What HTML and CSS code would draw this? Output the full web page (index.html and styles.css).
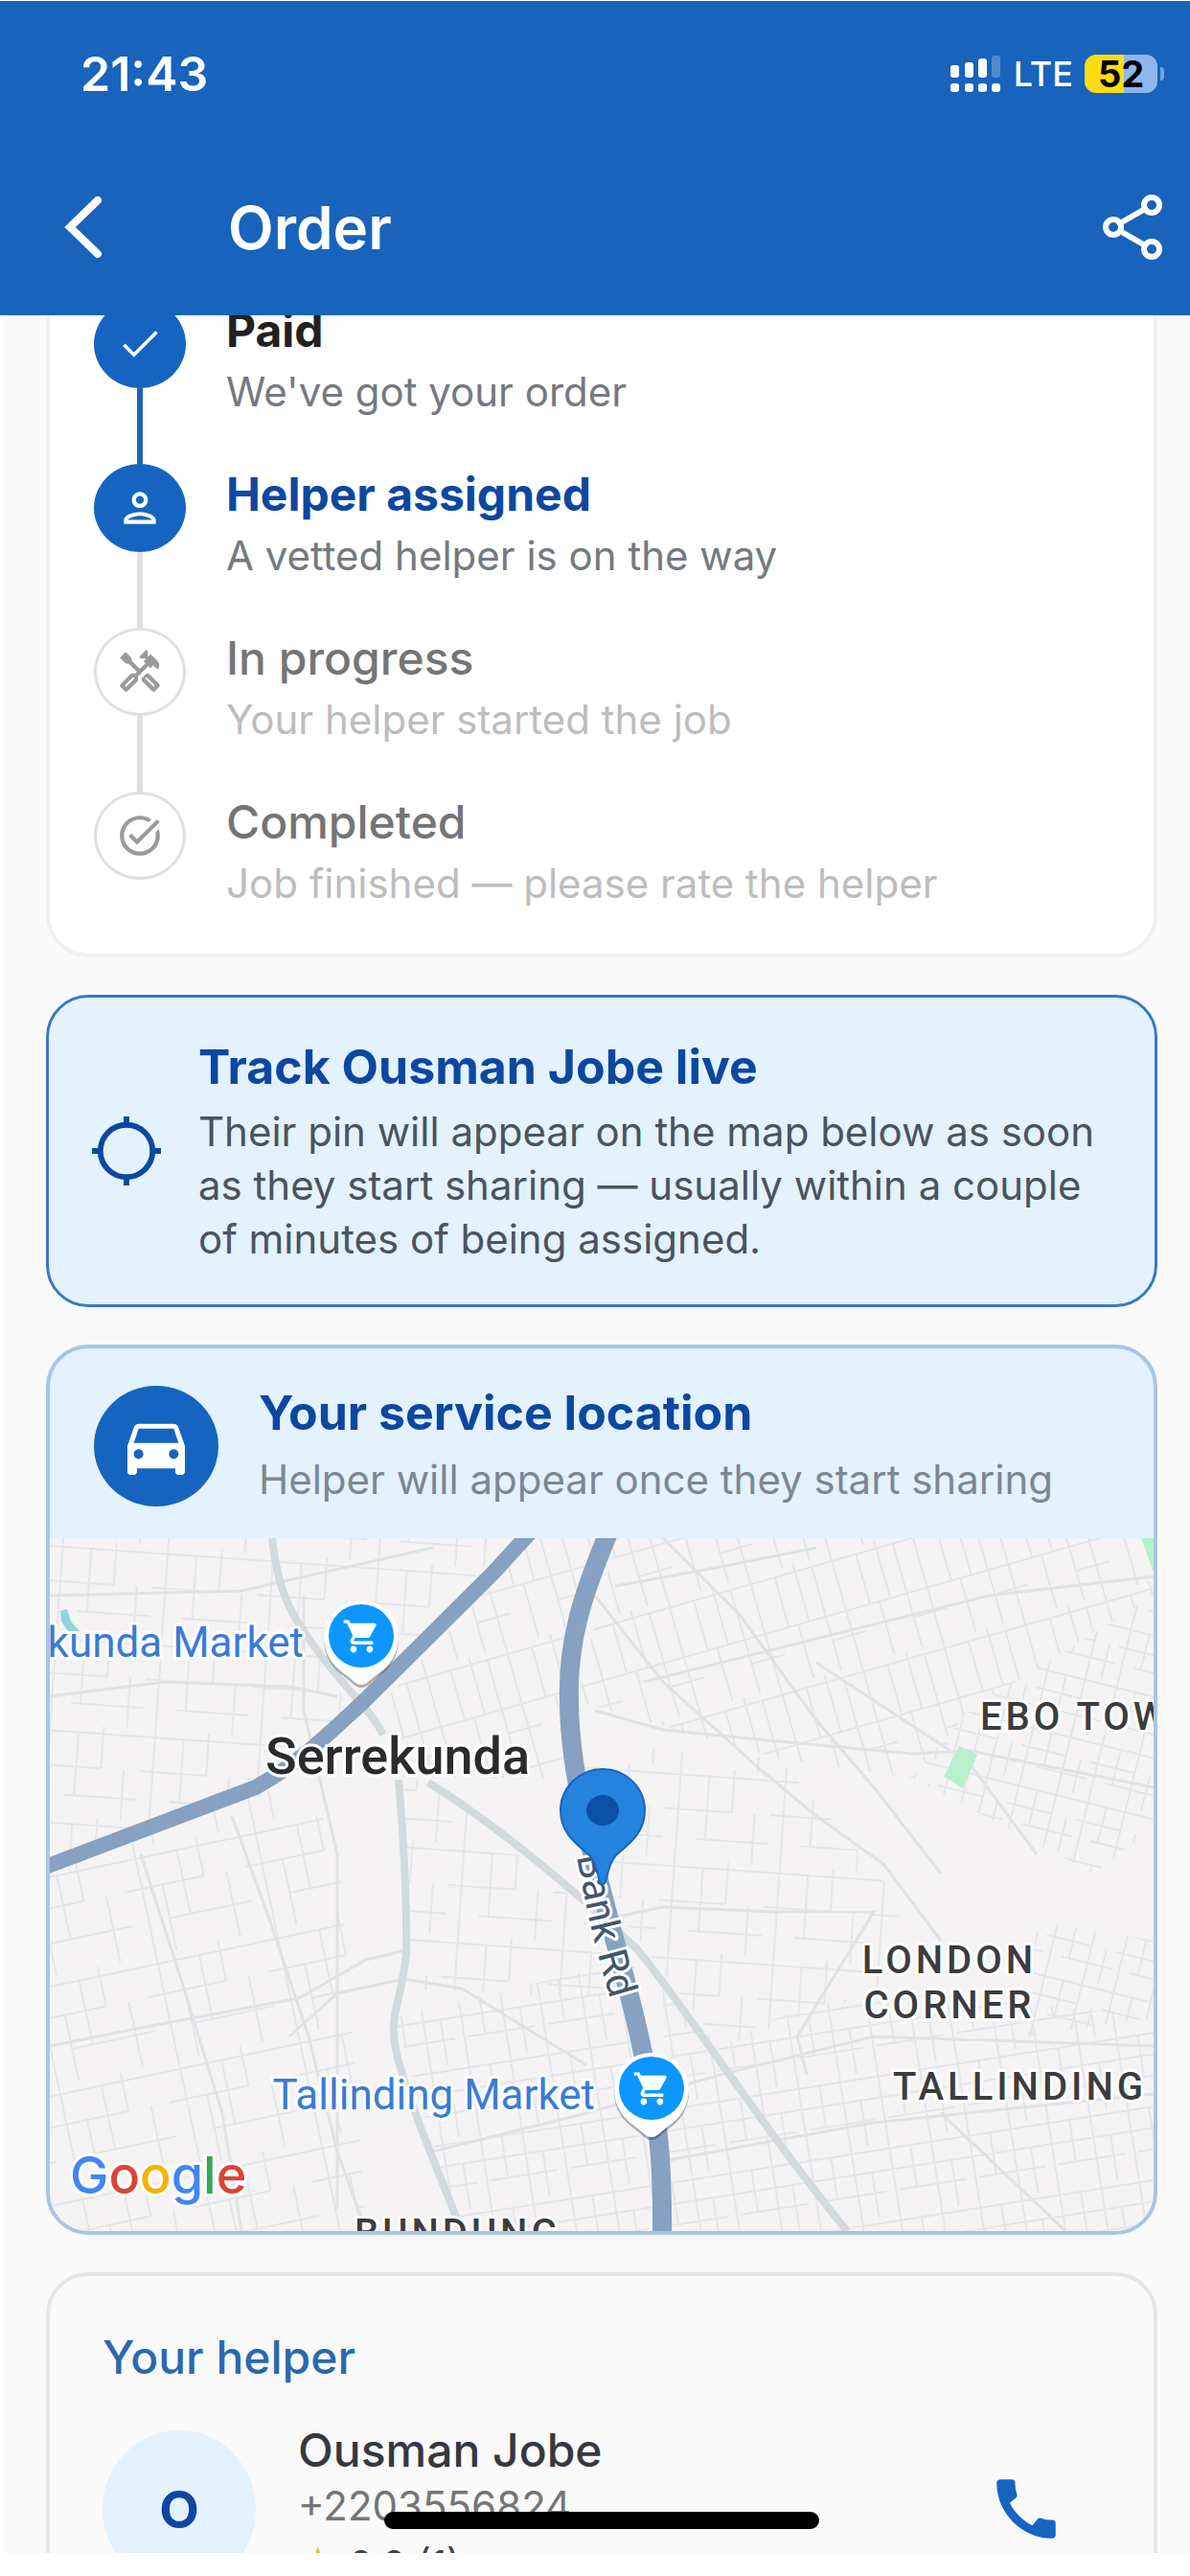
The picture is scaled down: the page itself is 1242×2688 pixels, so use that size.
FILE: index.html
```html
<!DOCTYPE html>
<html lang="en">
<head>
    <meta charset="UTF-8">
    <meta name="viewport" content="width=device-width, initial-scale=1">
    <title>Order</title>
    <link rel="stylesheet" href="styles.css">
</head>
<body>
    <div class="screen">
        <header class="top">
            <div class="status-bar">
                <span class="clock">21:43</span>
                <div class="status-icons">
                    <svg class="signal" viewBox="0 0 54 40" fill="#fff">
                        <rect x="0" y="11" width="9" height="13" rx="3"/>
                        <rect x="15" y="8" width="9" height="16" rx="3"/>
                        <rect x="29" y="4" width="9" height="20" rx="3"/>
                        <rect x="43" y="1" width="9" height="23" rx="3" opacity="0.25"/>
                        <rect x="0" y="30" width="9" height="9" rx="3"/>
                        <rect x="15" y="30" width="9" height="9" rx="3"/>
                        <rect x="29" y="30" width="9" height="9" rx="3"/>
                        <rect x="43" y="30" width="9" height="9" rx="3"/>
                    </svg>
                    <span class="network">LTE</span>
                    <span class="battery">52</span>
                </div>
            </div>
            <div class="app-bar">
                <button class="icon-button" aria-label="Back">
                    <svg class="back-icon" viewBox="0 0 44 68" fill="none" stroke="#fff" stroke-width="8" stroke-linecap="round"><path d="M38 6 L9 34 L38 62"/></svg>
                </button>
                <h1>Order</h1>
                <button class="icon-button" aria-label="Share">
                    <svg class="share-icon" viewBox="0 0 64 70" fill="none" stroke="#fff" stroke-width="6"><circle cx="12" cy="35" r="8"/><circle cx="52" cy="12" r="8"/><circle cx="52" cy="58" r="8"/><path d="M19 31 L45 16 M19 39 L45 54"/></svg>
                </button>
            </div>
        </header>

        <main class="content">
            <ol class="card steps">
                <li class="step done">
                    <span class="dot"><svg viewBox="0 0 24 24"><path d="M9 16.200 4.600 11.800l-1.200 1.200L9 18.600 21 6.600l-1.200-1.200z"/></svg></span>
                    <div class="step-text">
                        <h2>Paid</h2>
                        <p>We've got your order</p>
                    </div>
                </li>
                <li class="step current">
                    <span class="dot"><svg viewBox="0 0 24 24"><path d="M12 6a2 2 0 1 1 0 4 2 2 0 0 1 0-4m0 10c2.700 0 5.800 1.290 6 2H6c.230-.720 3.310-2 6-2m0-12C9.790 4 8 5.790 8 8s1.790 4 4 4 4-1.790 4-4-1.790-4-4-4zm0 10c-2.670 0-8 1.340-8 4v2h16v-2c0-2.660-5.330-4-8-4z"/></svg></span>
                    <div class="step-text">
                        <h2>Helper assigned</h2>
                        <p>A vetted helper is on the way</p>
                    </div>
                </li>
                <li class="step">
                    <span class="dot"><svg viewBox="0 0 24 24"><path d="M21.670 18.170l-5.300-5.300h-.990l-2.540 2.540v.990l5.300 5.300c.390.390 1.020.390 1.410 0l2.120-2.120c.390-.380.390-1.020 0-1.410zm-2.830 1.420-4.240-4.240.710-.710 4.240 4.240-.710.710z"/><path d="M17.340 10.190l1.410-1.410 2.120 2.120c1.170-1.170 1.170-3.070 0-4.240l-3.540-3.540-1.410 1.410V1.710l-.700-.710-3.540 3.540.710.710h2.830l-1.410 1.410 1.060 1.060-2.890 2.890-4.130-4.130V5.060L4.830 2.040 2 4.870 5.030 7.900h1.410l4.130 4.130-.850.850H7.600l-5.300 5.300c-.390.390-.390 1.020 0 1.410l2.120 2.120c.390.390 1.020.390 1.410 0l5.300-5.300v-2.120l5.150-5.150 1.060 1.050zm-7.980 5.150-4.240 4.240-.710-.710 4.240-4.240.710.710z"/></svg></span>
                    <div class="step-text">
                        <h2>In progress</h2>
                        <p>Your helper started the job</p>
                    </div>
                </li>
                <li class="step">
                    <span class="dot"><svg viewBox="0 0 24 24"><path d="M22 5.180 10.590 16.600l-4.240-4.240 1.410-1.410 2.830 2.830 10-10L22 5.180zm-2.210 5.040c.130.570.210 1.170.210 1.780 0 4.420-3.580 8-8 8s-8-3.580-8-8 3.580-8 8-8c1.580 0 3.040.460 4.280 1.250l1.440-1.440A9.900 9.900 0 0 0 12 2C6.480 2 2 6.480 2 12s4.480 10 10 10 10-4.480 10-10c0-1.190-.220-2.330-.600-3.390l-1.610 1.610z"/></svg></span>
                    <div class="step-text">
                        <h2>Completed</h2>
                        <p>Job finished — please rate the helper</p>
                    </div>
                </li>
            </ol>

            <section class="card track">
                <svg class="target-icon" viewBox="0 0 74 74" fill="none" stroke="#0d47a1" stroke-width="6"><circle cx="37" cy="37" r="28"/><path d="M37 0v11M37 63v11M0 37h11M63 37h11"/></svg>
                <div>
                    <h2>Track Ousman Jobe live</h2>
                    <p>Their pin will appear on the map below as soon as they start sharing — usually within a couple of minutes of being assigned.</p>
                </div>
            </section>

            <section class="card location">
                <div class="location-head">
                    <span class="car"><svg viewBox="0 0 24 24" fill="#fff"><path d="M18.920 6.010C18.720 5.420 18.160 5 17.500 5h-11c-.660 0-1.210.420-1.420 1.010L3 12v8c0 .550.450 1 1 1h1c.550 0 1-.450 1-1v-1h12v1c0 .550.450 1 1 1h1c.550 0 1-.450 1-1v-8l-2.080-5.990zM6.500 16c-.830 0-1.500-.670-1.500-1.500S5.670 13 6.500 13s1.500.670 1.500 1.500S7.330 16 6.500 16zm11 0c-.830 0-1.500-.670-1.500-1.500s.670-1.500 1.500-1.500 1.500.670 1.500 1.500-.670 1.500-1.500 1.500zM5 11l1.500-4.500h11L19 11H5z"/></svg></span>
                    <div>
                        <h2>Your service location</h2>
                        <p>Helper will appear once they start sharing</p>
                    </div>
                </div>
                <svg class="map" viewBox="0 0 1152 723" preserveAspectRatio="xMidYMid slice" role="img" aria-label="Map of Serrekunda">
                    <defs>
                        <pattern id="blocksA" width="128" height="112" patternUnits="userSpaceOnUse" patternTransform="rotate(-12)">
                            <path class="street" d="M0 10H128M0 42H84M40 78H128M18 0V112M62 10V78M108 42V112M40 42V112M84 0V42"/>
                        </pattern>
                        <pattern id="blocksB" width="88" height="120" patternUnits="userSpaceOnUse" patternTransform="rotate(-16)">
                            <path class="street" d="M0 8H88M0 62H88M12 8V62M34 0V62M52 8V120M74 0V120M22 62V120M52 88H88"/>
                        </pattern>
                        <pattern id="blocksC" width="74" height="62" patternUnits="userSpaceOnUse" patternTransform="rotate(14)">
                            <path class="street" d="M0 6H74M0 26H48M20 44H74M8 0V62M28 6V44M48 0V62M64 26V62"/>
                        </pattern>
                        <pattern id="blocksD" width="110" height="96" patternUnits="userSpaceOnUse" patternTransform="rotate(4)">
                            <path class="street" d="M0 8H110M0 44H70M34 74H110M14 0V96M44 8V74M70 0V44M94 44V96"/>
                        </pattern>
                        <pattern id="blocksE" width="84" height="76" patternUnits="userSpaceOnUse" patternTransform="rotate(-9)">
                            <path class="street" d="M0 6H84M0 28H84M14 50H84M10 0V76M32 6V50M54 0V76M72 28V76"/>
                        </pattern>
                        <path id="bankRd" d="M550 332 C558 378 568 425 586 484"/>
                        <g id="market">
                            <path d="M0 51 C-6 51 -9 46 -17 40 C-30 31 -39 19 -39 0 A39 37 0 0 1 39 0 C39 19 30 31 17 40 C9 46 6 51 0 51Z" fill="#000" opacity="0.3" transform="translate(0 3)"/>
                            <path d="M0 51 C-6 51 -9 46 -17 40 C-30 31 -39 19 -39 0 A39 37 0 0 1 39 0 C39 19 30 31 17 40 C9 46 6 51 0 51Z" fill="#fff"/>
                            <ellipse rx="34" ry="33" fill="#0b97ff"/>
                            <path transform="translate(-20 -20) scale(1.7)" fill="#fff" d="M7 18c-1.100 0-1.990.900-1.990 2S5.900 22 7 22s2-.900 2-2-.900-2-2-2zM1 2v2h2l3.600 7.590-1.350 2.450c-.160.280-.250.610-.250.960 0 1.100.900 2 2 2h12v-2H7.420c-.140 0-.250-.110-.250-.250l.030-.120.900-1.630h7.450c.750 0 1.410-.410 1.750-1.030l3.580-6.490A1 1 0 0 0 20 4H5.210l-.940-2H1zm16 16c-1.100 0-1.990.900-1.990 2s.890 2 1.990 2 2-.900 2-2-.900-2-2-2z"/>
                            <path d="M-12 -11 H14 L8 2 H-6Z" fill="#fff"/>
                        </g>
                    </defs>
                    <rect width="1152" height="723" fill="#f5f3f4"/>

                    <!-- small streets, one block pattern per district -->
                    <path fill="url(#blocksD)" d="M0 0H232L257 90 328 165 225 255 0 340Z"/>
                    <path fill="url(#blocksA)" d="M0 350 225 262 300 300 330 723 0 723Z"/>
                    <path fill="url(#blocksD)" d="M232 0H480L328 165 257 90Z M370 250 395 255 569 394 600 480 372 470Z"/>
                    <path fill="url(#blocksB)" d="M500 0H570L542 200 550 250 370 250 340 180Z"/>
                    <path fill="url(#blocksE)" d="M360 500 610 440 640 723 427 723Z M640 470 700 530 830 723 640 723Z"/>
                    <path fill="url(#blocksD)" d="M550 215 760 230 890 380 870 470 700 530 600 400Z"/>
                    <path fill="url(#blocksB)" d="M590 0H1152V60L960 180 900 250 760 230 550 170Z"/>
                    <path fill="url(#blocksC)" d="M1152 60V300L1090 350 900 250 960 180Z"/>
                    <path fill="url(#blocksE)" d="M760 500 870 470 1152 500V723H830L700 530Z"/>
                    <path fill="url(#blocksC)" d="M1030 400 1152 420V500L1020 520Z"/>

                    <!-- longer streets -->
                    <path class="lane" d="M640 0 720 80 800 190 860 260 930 350"/>
                    <path class="lane" d="M569 60 640 150 740 240 800 290 870 340 930 420"/>
                    <path class="lane" d="M569 180 640 200 760 212 900 225 960 222 1152 260"/>
                    <path class="lane" d="M590 50 700 30 800 10M620 150 780 110 980 60 1152 40"/>
                    <path class="lane" d="M0 530 100 510 260 480 330 440 372 430"/>
                    <path class="lane" d="M190 290 230 400 270 520 300 640 330 723"/>
                    <path class="lane" d="M95 330 140 470 180 600 200 723"/>
                    <path class="lane" d="M250 520 300 475 370 460 430 470 560 550"/>
                    <path class="lane" d="M265 60V180L300 330V700"/>
                    <path class="lane" d="M0 165 120 150 250 155 300 165M0 60 200 55 400 10"/>
                    <path class="lane" d="M569 400 640 385 760 390 860 390 780 520 790 560"/>
                    <path class="lane" d="M400 640 560 600 700 560 860 520 1152 530"/>
                    <path class="lane" d="M640 650 860 610 1152 580M930 600 1060 723"/>
                    <path class="lane" d="M800 130 960 235 1030 330"/>

                    <path fill="#b8efcd" d="M949 217 968 226 953 261 933 249Z M1139 0H1152V36Z"/>
                    <path fill="#8fd6da" d="M11 76 18 74 22 87 31 97 19 97 12 87Z"/>

                    <path class="road" d="M232 0 C238 55 250 80 285 125 S335 180 348 205"/>
                    <path class="road" d="M364 252 C368 300 373 380 372 434 C368 480 352 500 362 538 C375 590 405 660 430 723"/>
                    <path class="road" d="M395 255 C460 295 540 360 613 429 C660 485 740 610 832 723"/>

                    <path class="highway" d="M-10 345 L215 260 C260 235 290 205 328 170 L463 36 505 -10"/>
                    <path class="highway wide" d="M585 -10 C555 60 540 110 542 170 C542 280 600 440 618 533 C634 600 640 640 639 733"/>

                    <text class="place" x="265" y="124" text-anchor="end">Serrekunda Market</text>
                    <use href="#market" x="325" y="102"/>
                    <text class="city" x="225" y="246">Serrekunda</text>
                    <text class="road-name"><textPath href="#bankRd">Bank Rd</textPath></text>
                    <path d="M577 361 C571 361 574 344 564 332 C553 321 533 310 533 284 A44 43 0 0 1 621 284 C621 310 601 321 590 332 C580 344 583 361 577 361Z" fill="#2583de" stroke="#1a66bd" stroke-width="2"/>
                    <ellipse cx="577" cy="284" rx="17" ry="16" fill="#0a50a6"/>
                    <text class="area" x="971" y="200">EBO TOWN</text>
                    <text class="area" x="939" y="454" text-anchor="middle">LONDON</text>
                    <text class="area" x="939" y="501" text-anchor="middle">CORNER</text>
                    <text class="area" x="880" y="586">TALLINDING</text>
                    <text class="area" x="318" y="739">BUNDUNG</text>
                    <text class="place" x="569" y="596" text-anchor="end">Tallinding Market</text>
                    <use href="#market" x="628" y="574"/>
                    <text class="google" x="21" y="684"><tspan fill="#4285f4">G</tspan><tspan fill="#db4437">o</tspan><tspan fill="#f4b400">o</tspan><tspan fill="#4285f4">g</tspan><tspan fill="#34a853">l</tspan><tspan fill="#db4437">e</tspan></text>
                </svg>
            </section>

            <section class="card helper">
                <h2>Your helper</h2>
                <div class="helper-row">
                    <span class="avatar">O</span>
                    <div class="helper-info">
                        <h3>Ousman Jobe</h3>
                        <p>+2203556824</p>
                        <p class="rating"><span class="star">★</span> 0.0 (1)</p>
                    </div>
                    <button class="icon-button call" aria-label="Call helper">
                        <svg class="call-icon" viewBox="0 0 24 24" fill="#1565c0"><path d="M20.010 15.380c-1.230 0-2.420-.200-3.530-.560a.980.980 0 0 0-1.010.240l-1.570 1.970c-2.830-1.350-5.480-3.900-6.890-6.830l1.950-1.660c.270-.280.350-.670.240-1.020-.370-1.110-.560-2.300-.560-3.530 0-.540-.450-.990-.990-.990H4.190C3.650 3 3 3.240 3 3.990 3 13.280 10.730 21 20.010 21c.710 0 .990-.630.990-1.180v-3.450c0-.540-.450-.990-.990-.990z"/></svg>
                    </button>
                </div>
            </section>
        </main>
        <div class="home-bar"></div>
    </div>
</body>
</html>
```
FILE: styles.css
```css
* {
    box-sizing: border-box;
}
body {
    margin: 0;
    height: 100vh;
    padding-bottom: 24px;
    background-color: #fff;
    font-family: Inter, "Liberation Sans", sans-serif;
    overflow: hidden;
}
h1, h2, h3, p, ol {
    margin: 0;
    padding: 0;
}
.screen {
    position: relative;
    height: 100%;
    background-color: #fafafa;
    overflow: hidden;
}
.top {
    position: relative;
    z-index: 1;
    background-color: #1863bb;
    color: #fff;
    border-top: 1px solid #fff;
}
.status-bar {
    display: flex;
    justify-content: space-between;
    align-items: center;
    height: 152px;
    padding: 0 28px 0 84px;
}
.clock {
    font-size: 50px;
    font-weight: 600;
}
.status-icons {
    display: flex;
    align-items: center;
    gap: 12px;
}
.signal {
    width: 54px;
    height: 40px;
}
.network {
    font-size: 36px;
    font-weight: 500;
}
.battery {
    position: relative;
    width: 76px;
    height: 40px;
    margin-right: 6px;
    border-radius: 12px;
    background: linear-gradient(to right, #ffdb14 54%, #8db6ec 54%);
    color: #000;
    font-size: 38px;
    font-weight: 700;
    line-height: 40px;
    text-align: center;
}
.battery::after {
    content: "";
    position: absolute;
    right: -7px;
    top: 13px;
    width: 4px;
    height: 14px;
    border-radius: 0 4px 4px 0;
    background-color: #6fa3e0;
}
.app-bar {
    display: flex;
    align-items: center;
    height: 176px;
    padding: 0 28px 8px 64px;
}
.app-bar h1 {
    flex: 1;
    margin-left: 130px;
    font-size: 62px;
    font-weight: 600;
}
.icon-button {
    display: flex;
    padding: 0;
    border: none;
    background: none;
    cursor: pointer;
}
.back-icon {
    width: 44px;
    height: 68px;
}
.share-icon {
    width: 64px;
    height: 70px;
}

/* first card is scrolled partly under the app bar */
.content {
    display: flex;
    flex-direction: column;
    gap: 39px;
    margin-top: -60px;
    padding: 0 34px 0 44px;
    border-left: 4px solid #fff;
}
.card {
    flex: none;
    border: 4px solid #f0f0f0;
    border-radius: 44px;
    overflow: hidden;
}
.steps {
    padding: 40px 46px 77px;
    background-color: #fff;
    list-style: none;
}
.step {
    display: flex;
    gap: 42px;
    height: 171px;
}
.step:last-child {
    height: 92px;
}
.dot {
    position: relative;
    flex: none;
    display: flex;
    justify-content: center;
    align-items: center;
    width: 96px;
    height: 92px;
    border: 3px solid #e0e0e0;
    border-radius: 50%;
    background-color: #fff;
}
.dot svg {
    width: 50px;
    height: 50px;
    fill: #9a9a9a;
}
.step:not(:last-child) .dot::after {
    content: "";
    position: absolute;
    top: 89px;
    width: 6px;
    height: 79px;
    background-color: #e0e0e0;
}
.step.done .dot::after {
    background-color: #1f63b4 !important;
}
.step.done .dot,
.step.current .dot {
    border-color: #1565c0;
    background-color: #1565c0;
}
.step.done svg,
.step.current svg {
    fill: #fff;
}
.step h2 {
    color: #757575;
    font-size: 48px;
    font-weight: 500;
    line-height: 64px;
}
.step p {
    color: #bdbdbd;
    font-size: 42px;
    line-height: 64px;
}
.step.done h2 {
    color: #212121;
    font-weight: 700;
}
.step.current h2 {
    color: #0d47a1;
    font-weight: 700;
}
.step.done p,
.step.current p {
    color: #757980;
}
.track {
    display: flex;
    align-items: center;
    gap: 38px;
    padding: 40px 44px;
    border: 3px solid #3b78c0;
    background-color: #e3f2fd;
}
.target-icon {
    flex: none;
    width: 74px;
    height: 72px;
}
.track h2,
.location h2 {
    color: #0d47a1;
    font-size: 50px;
    font-weight: 700;
    line-height: 64px;
}
.track p {
    margin-top: 8px;
    color: #4a545e;
    font-size: 42px;
    line-height: 56px;
}
.location {
    border-color: #a9c5e3;
    background-color: #e3f2fd;
}
.location-head {
    display: flex;
    align-items: center;
    gap: 42px;
    height: 198px;
    padding: 6px 46px 0;
}
.location-head p {
    margin-top: 6px;
    color: #7b8894;
    font-size: 42px;
    line-height: 64px;
}
.car {
    display: flex;
    justify-content: center;
    align-items: center;
    width: 130px;
    height: 126px;
    border-radius: 50%;
    background-color: #1565c0;
}
.car svg {
    width: 84px;
    height: 80px;
}
.map {
    display: block;
    width: 100%;
    height: 723px;
    font-family: Roboto, "Liberation Sans", sans-serif;
}
.street {
    fill: none;
    stroke: #e4e6e9;
    stroke-width: 2;
}
.lane {
    fill: none;
    stroke: #dfe3e6;
    stroke-width: 3;
}
.road {
    fill: none;
    stroke: #d2dade;
    stroke-width: 8;
}
.highway {
    fill: none;
    stroke: #86a1c1;
    stroke-width: 16;
}
.highway.wide {
    stroke-width: 20;
}
.map text {
    paint-order: stroke;
    stroke: #fff;
    stroke-width: 6px;
    stroke-linejoin: round;
}
.map .place {
    fill: #3a7bd5;
    font-size: 44px;
}
.map .city {
    fill: #2b2b2e;
    font-size: 54px;
    font-weight: 500;
}
.map .area {
    fill: #3c3c40;
    font-size: 40px;
    font-weight: 500;
    letter-spacing: 4px;
}
.map .road-name {
    fill: #42566e;
    font-size: 42px;
}
.map .google {
    font-family: Inter, sans-serif;
    font-size: 54px;
    font-weight: 500;
}
.helper {
    padding: 57px 56px 40px 55px;
    border-color: #e6e6e6;
}
.helper h2 {
    color: #2a68b0;
    font-size: 48px;
    font-weight: 500;
    line-height: 56px;
}
.helper-row {
    display: flex;
    align-items: center;
    gap: 44px;
    margin-top: 40px;
}
.avatar {
    display: flex;
    justify-content: center;
    align-items: center;
    width: 160px;
    height: 164px;
    border-radius: 50%;
    background-color: #e3f2fd;
    color: #0d47a1;
    font-size: 54px;
    font-weight: 700;
}
.helper-info {
    flex: 1;
}
.helper-info h3 {
    color: #36383f;
    font-size: 48px;
    font-weight: 500;
    line-height: 58px;
}
.helper-info p {
    color: #757575;
    font-size: 42px;
    line-height: 58px;
}
.helper-info .rating {
    color: #424242;
    font-size: 40px;
    line-height: 64px;
}
.star {
    color: #f5b82e;
}
.call {
    margin-right: 36px;
}
.call-icon {
    width: 82px;
    height: 82px;
}
.home-bar {
    position: absolute;
    left: 50%;
    bottom: 25px;
    width: 454px;
    height: 18px;
    margin-left: -220px;
    border-radius: 9px;
    background-color: #000;
}
```
